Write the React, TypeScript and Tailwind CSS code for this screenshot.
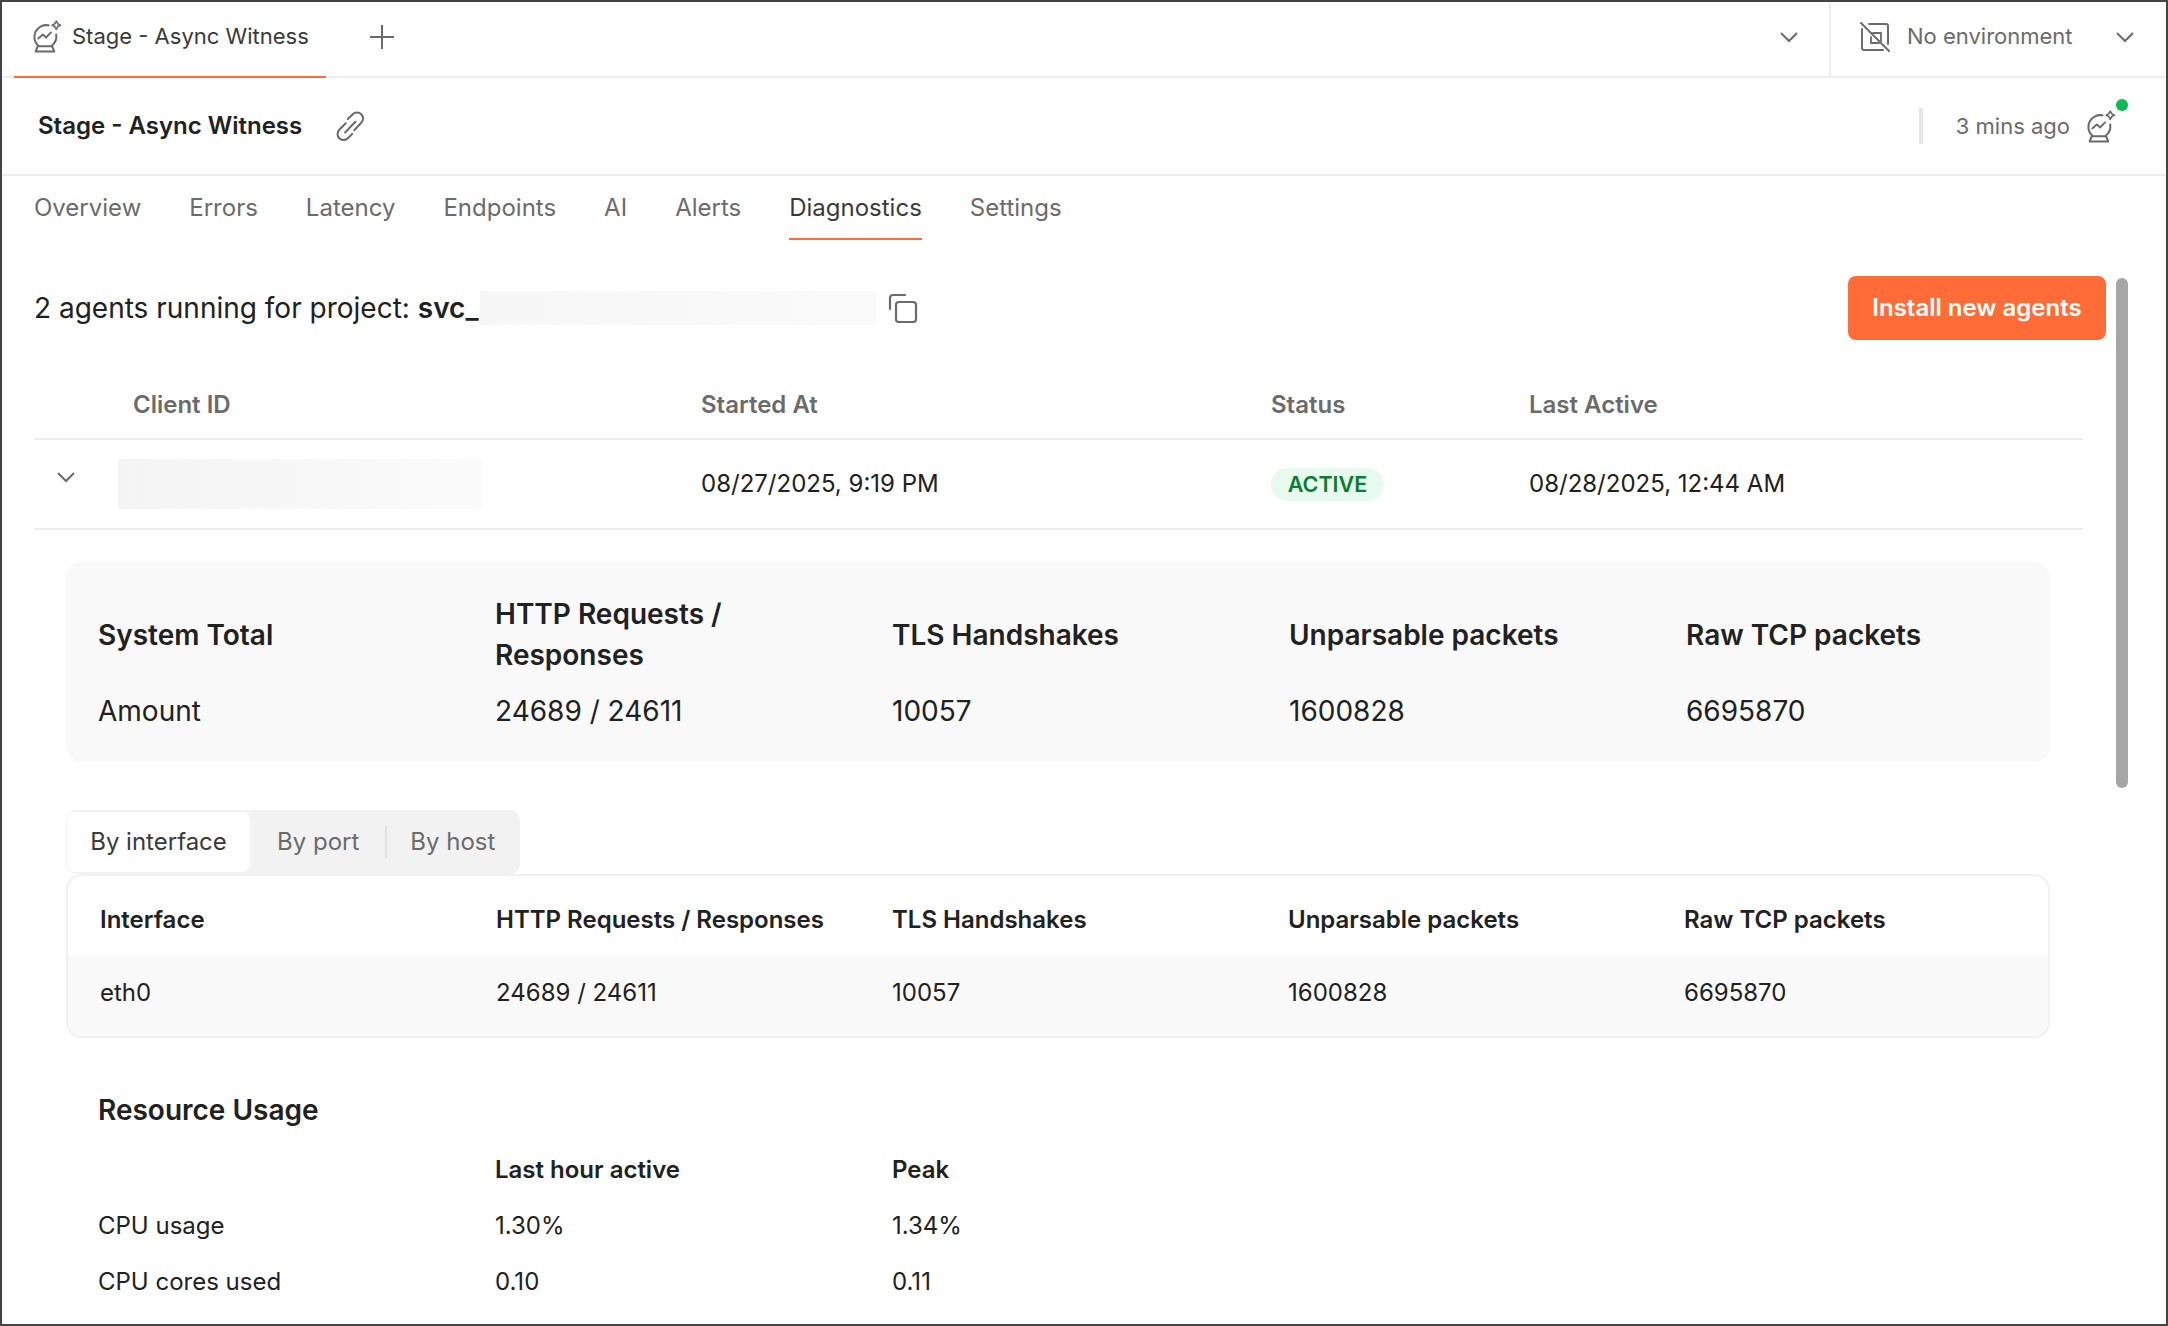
const GRAY = "#6b6b6b";

function Chevron({ className = "" }: { className?: string }) {
  return (
    <svg width="20" height="12" viewBox="0 0 20 12" fill="none" stroke={GRAY} strokeWidth="2" className={className}>
      <path d="M2 2l8 8 8-8" />
    </svg>
  );
}

function BallIcon() {
  return (
    <svg width="30" height="33" viewBox="0 0 29 32" fill="none" stroke={GRAY} strokeWidth="2" strokeLinecap="round" strokeLinejoin="round">
      <path d="M16 5.2A11.5 11.5 0 0 0 6 25" />
      <path d="M23.4 14a11.5 11.5 0 0 1-4.4 11" />
      <path d="M5.5 25.5h14l2 5H3.5z" />
      <path d="M6 18l4.5-4 3 3 5-5" strokeWidth="1.8" />
      <path d="M23.5 1l1.4 2.6 2.6 1.4-2.6 1.4-1.4 2.6-1.4-2.6-2.6-1.4 2.6-1.4z" strokeWidth="1.6" />
    </svg>
  );
}

function NoEnvIcon() {
  return (
    <svg width="30" height="30" viewBox="0 0 30 30" fill="none" stroke={GRAY} strokeWidth="2" strokeLinecap="round" strokeLinejoin="round">
      <path d="M1 1l28 28" />
      <path d="M9 2h17a2 2 0 0 1 2 2v18" />
      <path d="M2 7v19a2 2 0 0 0 2 2h19" />
      <path d="M13 11h8v8M19 21h-8v-6" strokeWidth="1.8" />
    </svg>
  );
}

function LinkIcon() {
  return (
    <svg width="30" height="30" viewBox="0 0 28 28" fill="none" stroke={GRAY} strokeWidth="1.9" strokeLinecap="round" strokeLinejoin="round">
      <path d="M12 7.5l4.5-4.5a5.6 5.6 0 0 1 8 8L18 18" />
      <path d="M10 11.5l-6 6a5.6 5.6 0 0 0 8 8l4-4" />
      <path d="M9.5 20L19 10" />
    </svg>
  );
}

function CopyIcon() {
  return (
    <svg width="30" height="30" viewBox="0 0 30 30" fill="none" stroke={GRAY} strokeWidth="2.2" strokeLinecap="round">
      <path d="M2 16V5a3 3 0 0 1 3-3h12" />
      <rect x="8" y="9" width="20" height="20" rx="3" />
    </svg>
  );
}

const NAV = ["Overview", "Errors", "Latency", "Endpoints", "AI", "Alerts", "Diagnostics", "Settings"];

const TOTALS = [
  ["System Total", "Amount"],
  ["HTTP Requests / Responses", "24689 / 24611"],
  ["TLS Handshakes", "10057"],
  ["Unparsable packets", "1600828"],
  ["Raw TCP packets", "6695870"],
];

const IFACE_HEAD = ["Interface", "HTTP Requests / Responses", "TLS Handshakes", "Unparsable packets", "Raw TCP packets"];
const IFACE_ROW = ["eth0", "24689 / 24611", "10057", "1600828", "6695870"];

export default function App() {
  return (
    <div className="relative h-[1326px] w-[2168px] overflow-hidden border-2 border-[#444444] bg-white text-[#212121] [font-family:Inter,sans-serif]">
      {/* tab strip */}
      <div className="flex h-[76px] items-stretch border-b-2 border-[#ededed]">
        <div className="-mb-[2px] ml-[12px] flex w-[312px] items-center border-b-2 border-[#ff6c37] pb-[5px] pl-[18px]">
          <BallIcon />
          <span className="ml-[10px] text-[22px] text-[#3a3a3a]">Stage - Async Witness</span>
        </div>
        <div className="ml-[43px] flex items-center pb-[5px]">
          <svg width="26" height="26" viewBox="0 0 26 26" stroke={GRAY} strokeWidth="2">
            <path d="M13 1v24M1 13h24" />
          </svg>
        </div>
        <div className="ml-auto flex items-center pb-[5px] pr-[30px]">
          <Chevron />
        </div>
        <div className="flex w-[337px] items-center border-l-2 border-[#ededed] pb-[5px] pl-[29px]">
          <NoEnvIcon />
          <span className="ml-[17px] text-[22px] text-[#6b6b6b]">No environment</span>
          <Chevron className="ml-[42px]" />
        </div>
      </div>

      {/* title row */}
      <div className="flex h-[98px] items-center border-b-2 border-[#ededed] pl-[36px] pr-[50px]">
        <span className="text-[24px] font-semibold">Stage - Async Witness</span>
        <span className="ml-[33px]">
          <LinkIcon />
        </span>
        <div className="ml-auto h-[36px] w-[4px] bg-[#e6e6e6]" />
        <span className="ml-[33px] text-[22px] text-[#6b6b6b]">3 mins ago</span>
        <div className="relative ml-[16px]">
          <BallIcon />
          <span className="absolute -right-[12px] -top-[11px] h-[12px] w-[12px] rounded-full bg-[#0cbb52]" />
        </div>
      </div>

      {/* sub nav */}
      <div className="flex h-[64px] items-stretch gap-[48px] pl-[32px]">
        {NAV.map((n) => (
          <div
            key={n}
            className={`flex items-center border-b-2 pt-[2px] text-[24px] ${
              n === "Diagnostics" ? "border-[#ff6c37] text-[#3a3a3a]" : "border-transparent text-[#6b6b6b]"
            }`}
          >
            {n}
          </div>
        ))}
      </div>

      <div className="pl-[32px] pr-[83px]">
        {/* heading, the project id is covered by a redaction box */}
        <div className="mt-[36px] flex h-[64px] items-center">
          <span className="text-[28px]">2 agents running for project:&nbsp;</span>
          <span className="w-[62px] shrink-0 text-[28px] font-semibold whitespace-nowrap">svc_2</span>
          <div className="relative h-[34px] w-[396px] bg-gradient-to-r from-[#f7f7f7] to-[#fafafa]" />
          <span className="ml-[12px]">
            <CopyIcon />
          </span>
          <button className="ml-auto -mr-[23px] h-[64px] w-[258px] rounded-[8px] bg-[#ff6c37] text-[24px] font-semibold text-white">
            Install new agents
          </button>
        </div>

        {/* agents table */}
        <div className="grid h-[100px] grid-cols-[667px_570px_258px_1fr] items-center border-b-2 border-[#ededed] pt-[32px] text-[24px] font-semibold text-[#6b6b6b]">
          <div className="pl-[99px]">Client ID</div>
          <div>Started At</div>
          <div>Status</div>
          <div>Last Active</div>
        </div>
        <div className="grid h-[90px] grid-cols-[667px_570px_258px_1fr] items-center border-b-2 border-[#ededed] text-[24px]">
          <div className="flex items-center">
            <Chevron className="ml-[22px] -mt-[15px]" />
            <div className="ml-[42px] h-[50px] w-[364px] bg-gradient-to-r from-[#f4f4f4] to-[#fbfbfb]" />
          </div>
          <div>08/27/2025, 9:19 PM</div>
          <div>
            <span className="inline-flex h-[33px] w-[113px] items-center justify-center rounded-full bg-[#e6fbee] text-[21.5px] font-semibold text-[#0a7d32]">
              ACTIVE
            </span>
          </div>
          <div>08/28/2025, 12:44 AM</div>
        </div>

        {/* system totals */}
        <div className="ml-[32px] mt-[32px] h-[200px] w-[1984px] rounded-[16px] bg-[#f9f9f9] pl-[32px] pt-[32px]">
          <div className="grid grid-cols-[397px_397px_397px_397px_1fr] items-center text-[28px] font-semibold leading-[41px]">
            {TOTALS.map(([h]) => (
              <div key={h} className="max-w-[300px]">
                {h}
              </div>
            ))}
          </div>
          <div className="mt-[15px] grid grid-cols-[397px_397px_397px_397px_1fr] text-[28px] leading-[40px]">
            {TOTALS.map(([h, v]) => (
              <div key={h}>{v}</div>
            ))}
          </div>
        </div>

        {/* breakdown switcher */}
        <div className="ml-[32px] mt-[48px] flex h-[64px] w-[454px] items-center rounded-[10px] bg-[#f2f2f2] pl-[1px] text-[24px] text-[#6b6b6b]">
          <div className="flex h-[60px] w-[183px] items-center justify-center rounded-[8px] bg-white text-[#3a3a3a]">
            By interface
          </div>
          <span className="ml-[27px]">By port</span>
          <span className="ml-[26px] h-[32px] w-[2px] bg-[#e0e0e0]" />
          <span className="ml-[23px]">By host</span>
        </div>

        {/* breakdown table */}
        <div className="ml-[32px] h-[164px] w-[1984px] overflow-hidden rounded-[16px] border-2 border-[#f0f0f0] text-[24px]">
          <div className="grid h-[80px] grid-cols-[396px_396px_396px_396px_1fr] items-center pl-[32px] pt-[7px] font-semibold">
            {IFACE_HEAD.map((h) => (
              <div key={h}>{h}</div>
            ))}
          </div>
          <div className="grid h-[82px] grid-cols-[396px_396px_396px_396px_1fr] items-center bg-[#f9f9f9] pb-[9px] pl-[32px]">
            {IFACE_ROW.map((v) => (
              <div key={v}>{v}</div>
            ))}
          </div>
        </div>

        {/* resource usage */}
        <div className="ml-[64px] mt-[55px] text-[28px] font-semibold leading-[34px]">Resource Usage</div>
        <div className="ml-[64px] mt-[15px] grid grid-cols-[397px_397px_1fr] grid-rows-[56px_56px_56px] items-center text-[24px]">
          <div />
          <div className="font-semibold">Last hour active</div>
          <div className="font-semibold">Peak</div>
          <div>CPU usage</div>
          <div>1.30%</div>
          <div>1.34%</div>
          <div>CPU cores used</div>
          <div>0.10</div>
          <div>0.11</div>
        </div>
      </div>

      {/* overlay scrollbar */}
      <div className="absolute right-[38px] top-[276px] h-[510px] w-[12px] rounded-full bg-[#a6a6a6]" />
    </div>
  );
}
